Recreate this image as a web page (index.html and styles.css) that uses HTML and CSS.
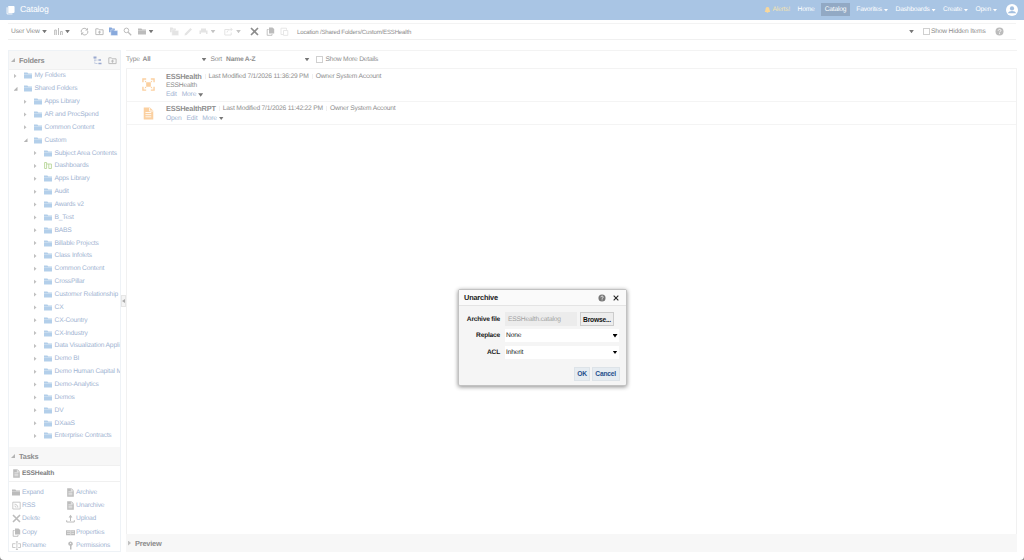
FILE: index.html
```html
<!DOCTYPE html>
<html lang="en">
<head>
  <meta charset="utf-8">
  <title>Catalog</title>
  <link rel="stylesheet" href="styles.css">
</head>
<body>
  <svg class="sprite">
    <symbol id="folder" viewBox="0 0 9 7"><path fill="currentColor" d="M0 .4h3.4l.8 1H8v5.2H0z"/><path stroke="#fff" stroke-width=".5" opacity=".7" d="M0 2.3h8"/></symbol>
    <symbol id="dash" viewBox="0 0 9 9"><path fill="none" stroke="currentColor" stroke-width=".9" d="M.6 7.5v-6h2v6zM2.6 3h4.8v4.5H4.8V3"/></symbol>
    <symbol id="chart" viewBox="0 0 9 9"><path fill="none" stroke="currentColor" d="M.7 8V3h1.6v5M4.5 8V1M6.5 8V4.5h1.8V8"/></symbol>
    <symbol id="refresh" viewBox="0 0 9 9"><path fill="none" stroke="currentColor" d="M1.2 5A3.2 3.2 0 0 1 6.8 2.4M7.8 4A3.2 3.2 0 0 1 2.2 6.8"/><path fill="currentColor" d="M5 3.4h3V.8zM4 5.6H1v2.6z"/></symbol>
    <symbol id="up" viewBox="0 0 9 9"><path fill="none" stroke="currentColor" d="M.8 7.6V1.8h2.6l.8 1h3.9v4.8z"/><path fill="currentColor" d="M4.5 3.4 6.3 5.4H5.1v1.4H3.9V5.4H2.7z"/></symbol>
    <symbol id="stack" viewBox="0 0 9 9"><path fill="currentColor" d="M0 .6h2.6l.6.8h2.6v3.8H0z"/><path fill="currentColor" stroke="#fff" stroke-width=".4" d="M1.8 2.8h2.6l.7.8h3.6v5H1.8z"/></symbol>
    <symbol id="find" viewBox="0 0 9 9"><circle cx="3.4" cy="3.4" r="2.3" fill="none" stroke="currentColor"/><path stroke="currentColor" stroke-width="1.3" d="m5.2 5.2 3 3"/></symbol>
    <symbol id="pencil" viewBox="0 0 9 9"><path fill="currentColor" d="M.5 8.5 1 6.4 6.4 1 8 2.6 2.6 8z"/></symbol>
    <symbol id="print" viewBox="0 0 9 9"><path fill="currentColor" d="M2 1.5h5v2h1.5V7H7V5.5H2V7H.5V3.5H2z"/></symbol>
    <symbol id="export" viewBox="0 0 9 9"><path fill="none" stroke="currentColor" d="M5 2.5H.8V8h6.4V5.5M3 5.5C3.5 3 5 2.5 8 2.5M6.5.8 8.2 2.5 6.5 4.2"/></symbol>
    <symbol id="cross" viewBox="0 0 9 9"><path stroke="currentColor" stroke-width="1.6" d="m1 1 7 7M8 1 1 8"/></symbol>
    <symbol id="copy" viewBox="0 0 9 9"><path fill="currentColor" d="M3 .5h3.5L8.2 2v4.5H3z"/><path fill="none" stroke="currentColor" stroke-width=".9" d="M2.6 2.5H1.2v5.8H6V7"/></symbol>
    <symbol id="paste" viewBox="0 0 9 9"><path fill="none" stroke="currentColor" stroke-width=".9" d="M3 7.5H1V1.2h5.5v1.6M3.5 3.5h4.3v4.9H3.500z"/></symbol>
    <symbol id="doc" viewBox="0 0 9 9"><path fill="currentColor" d="M1.2.3h4.3l2.3 2.3v6.1H1.2z"/><path stroke="#fff" stroke-width=".6" d="M2.4 3.8h4M2.4 5.3h4M2.4 6.8h4M5.3.6v2.200h2.300" fill="none"/></symbol>
    <symbol id="tree" viewBox="0 0 9 9"><path fill="currentColor" d="M.5.5h3v2h-3zM5.5 3.3H8v1.5H5.5zM5.5 6.7h3v1.5h-3z"/><path fill="none" stroke="currentColor" stroke-width=".7" stroke-dasharray="1 .6" d="M1.8 2.5v5h3.5M1.8 4.1h3.5"/></symbol>
    <symbol id="rss" viewBox="0 0 9 9"><path fill="none" stroke="currentColor" stroke-width=".8" d="M.8 1.2h7.4V8H.8zM2.500 3.200c2 0 3.300 1.300 3.300 3.400M2.500 5c1 0 1.500.6 1.500 1.600"/></symbol>
    <symbol id="upload" viewBox="0 0 9 9"><path fill="none" stroke="currentColor" d="M.7 6.2V8h7.6V6.2M4.5 7V3"/><path fill="currentColor" d="M4.5.8 6.4 3.5H2.6z"/></symbol>
    <symbol id="props" viewBox="0 0 9 9"><path fill="currentColor" d="M0 2.2h9v5H0z"/><path stroke="#fff" stroke-width=".5" d="M1 3.7h3M1 5.5h3M4.7 2.5v4.4M5.5 3.7h2.6M5.5 5.5h2.6"/></symbol>
    <symbol id="rename" viewBox="0 0 9 9"><path fill="none" stroke="currentColor" stroke-width=".8" d="M3.5 2.7H.6v3.8h2.9M6.2 2.7h2.3v3.8H6.2M4.9.8v7.7M3.9.8h2M3.9 8.5h2"/></symbol>
    <symbol id="key" viewBox="0 0 9 9"><path fill="currentColor" d="M2.2 2.7a2.3 2.3 0 1 1 3.3 2.1v3.8H4V4.8a2.3 2.3 0 0 1-1.8-2.1z"/><circle cx="4.6" cy="2.3" r=".6" fill="#fff"/></symbol>
    <symbol id="model" viewBox="0 0 14 14"><path fill="none" stroke="currentColor" stroke-width="1.5" d="M1 4.5V1h3.5M9.5 1H13v3.5M13 9.5V13H9.5M4.5 13H1V9.5"/><path fill="currentColor" d="M4.5 4.5h5v5h-5zM2.8 2.8l2 .8-1.2 1.2zM11.2 2.8l-.8 2-1.2-1.2zM11.2 11.2l-2-.8 1.2-1.2zM2.8 11.2l.8-2 1.2 1.2z"/></symbol>
    <symbol id="bell" viewBox="0 0 9 9"><path fill="currentColor" d="M4.5.5c2 0 2.5 1.5 2.5 3.5L8 7H1l1-3C2 2 2.5.5 4.5.5zM3.5 7.5h2v1h-2z"/></symbol>
    <symbol id="help" viewBox="0 0 9 9"><circle cx="4.5" cy="4.5" r="4" fill="currentColor"/><path fill="none" stroke="#fff" stroke-width=".9" d="M3.2 3.7c0-1.7 2.7-1.7 2.7-.2 0 .9-1.3.9-1.3 1.9M4.6 6.1v1"/></symbol>
  </svg>

  <header class="banner">
    <svg class="logo" viewBox="0 0 10 10"><path fill="#fff" d="M2.5.5h6.2l.8.8v6.2l-1 .8h-6z"/><path fill="none" stroke="#fff" d="M1.2 2v7.4h6"/></svg>
    <h1>Catalog</h1>
    <nav>
      <a class="alerts"><svg class="icon"><use href="#bell"/></svg>Alerts!</a>
      <a>Home</a>
      <a class="current">Catalog</a>
      <a>Favorites<i class="caret"></i></a>
      <a>Dashboards<i class="caret"></i></a>
      <a>Create<i class="caret"></i></a>
      <a class="open">Open<i class="caret"></i></a>
      <svg class="avatar" viewBox="0 0 12 12"><circle cx="6" cy="6" r="6" fill="#fff"/><circle cx="6" cy="4.4" r="2.1" fill="#a2bfe0"/><path fill="#a2bfe0" d="M2 9.3c.5-3.2 7.5-3.2 8 0z"/></svg>
    </nav>
  </header>

  <div class="toolbar">
    <span>User View</span><i class="caret"></i>
    <svg class="icon"><use href="#chart"/></svg><i class="caret"></i>
    <svg class="icon"><use href="#refresh"/></svg>
    <svg class="icon"><use href="#up"/></svg>
    <svg class="icon blue"><use href="#stack"/></svg>
    <svg class="icon"><use href="#find"/></svg>
    <svg class="icon"><use href="#folder"/></svg><i class="caret"></i>
    <svg class="icon off"><use href="#stack"/></svg>
    <svg class="icon off"><use href="#pencil"/></svg>
    <svg class="icon off"><use href="#print"/></svg><i class="caret off"></i>
    <svg class="icon off"><use href="#export"/></svg><i class="caret off"></i>
    <svg class="icon dark"><use href="#cross"/></svg>
    <svg class="icon"><use href="#copy"/></svg>
    <svg class="icon off"><use href="#paste"/></svg>
    <span class="location">Location /Shared Folders/Custom/ESSHealth</span><i class="caret"></i>
    <i class="check"></i><span>Show Hidden Items</span>
    <svg class="icon help"><use href="#help"/></svg>
  </div>

  <div class="page">
    <aside>
      <div class="bar">
        <i class="corner"></i><b>Folders</b>
        <svg class="icon tree-icon"><use href="#tree"/></svg>
        <svg class="icon"><use href="#up"/></svg>
      </div>
      <ul class="tree"></ul>
      <div class="bar tasks-bar"><i class="corner"></i><b>Tasks</b></div>
      <div class="selected"><svg class="icon"><use href="#doc"/></svg><b>ESSHealth</b></div>
      <div class="tasks">
        <a><svg class="icon"><use href="#folder"/></svg>Expand</a>
        <a><svg class="icon"><use href="#doc"/></svg>Archive</a>
        <a><svg class="icon"><use href="#rss"/></svg>RSS</a>
        <a><svg class="icon"><use href="#doc"/></svg>Unarchive</a>
        <a><svg class="icon"><use href="#cross"/></svg>Delete</a>
        <a><svg class="icon"><use href="#upload"/></svg>Upload</a>
        <a><svg class="icon"><use href="#copy"/></svg>Copy</a>
        <a><svg class="icon"><use href="#props"/></svg>Properties</a>
        <a><svg class="icon"><use href="#rename"/></svg>Rename</a>
        <a><svg class="icon"><use href="#key"/></svg>Permissions</a>
      </div>
    </aside>
    <div class="splitter"><span></span></div>
    <main>
      <div class="filters">
        <span>Type</span><b>All</b><i class="caret"></i>
        <span>Sort</span><b>Name A-Z</b><i class="caret"></i>
        <i class="check"></i><span>Show More Details</span>
      </div>
      <div class="list">
        <div class="item">
          <svg class="model"><use href="#model"/></svg>
          <div>
            <p><b>ESSHealth</b><i class="sep"></i>Last Modified 7/1/2026 11:36:29 PM<i class="sep"></i>Owner System Account</p>
            <p>ESSHealth</p>
            <p class="links"><a>Edit</a><a>More</a><i class="caret"></i></p>
          </div>
        </div>
        <div class="item">
          <svg class="report"><use href="#doc"/></svg>
          <div>
            <p><b>ESSHealthRPT</b><i class="sep"></i>Last Modified 7/1/2026 11:42:22 PM<i class="sep"></i>Owner System Account</p>
            <p class="links"><a>Open</a><a>Edit</a><a>More</a><i class="caret"></i></p>
          </div>
        </div>
      </div>
      <div class="bar preview"><i class="arrow"></i><b>Preview</b></div>
    </main>
  </div>

  <div class="dialog">
    <div class="dialog-title">
      <b>Unarchive</b>
      <svg class="icon"><use href="#help"/></svg>
      <svg class="icon close"><use href="#cross"/></svg>
    </div>
    <div class="form">
      <label>Archive file</label>
      <div class="file"><span>ESSHealth.catalog</span><button>Browse...</button></div>
      <label>Replace</label>
      <div class="select">None<i class="caret"></i></div>
      <label>ACL</label>
      <div class="select">Inherit<i class="caret"></i></div>
    </div>
    <div class="buttons"><button>OK</button><button>Cancel</button></div>
  </div>

  <script>
// [depth, name, state]
const folders = [
  [0, 'My Folders'],
  [0, 'Shared Folders', 'open'],
  [1, 'Apps Library'],
  [1, 'AR and ProcSpend'],
  [1, 'Common Content'],
  [1, 'Custom', 'open'],
  [2, 'Subject Area Contents'],
  [2, 'Dashboards', 'dash'],
  [2, 'Apps Library'],
  [2, 'Audit'],
  [2, 'Awards v2'],
  [2, 'B_Test'],
  [2, 'BABS'],
  [2, 'Billable Projects'],
  [2, 'Class Infolets'],
  [2, 'Common Content'],
  [2, 'CrossPillar'],
  [2, 'Customer Relationship'],
  [2, 'CX'],
  [2, 'CX-Country'],
  [2, 'CX-Industry'],
  [2, 'Data Visualization Appli'],
  [2, 'Demo BI'],
  [2, 'Demo Human Capital M'],
  [2, 'Demo-Analytics'],
  [2, 'Demos'],
  [2, 'DV'],
  [2, 'DXaaS'],
  [2, 'Enterprise Contracts'],
]

document.querySelector('.tree').innerHTML = folders.map(([depth, name, state]) => `
  <li class="depth-${depth}">
    <i class="${state === 'open' ? 'corner' : 'arrow'}"></i>
    <svg class="icon ${state === 'dash' ? 'green' : ''}"><use href="#${state === 'dash' ? 'dash' : 'folder'}"/></svg>${name}
  </li>`).join('')
  </script>
</body>
</html>
```
FILE: styles.css
```css
* { box-sizing: border-box; }
html { background: #8a8a8a; }
body {
  margin: 0;
  height: 560px;
  display: flex;
  flex-direction: column;
  overflow: hidden;
  background: #fff;
  border-radius: 0 0 4px 4px;
  color: #8e8e8e;
  font: 6.7px/9px 'Liberation Sans', Arial, sans-serif;
  letter-spacing: -.2px;
  text-rendering: geometricPrecision;
}
p, h1, ul { margin: 0; padding: 0; }
i { flex: none; }
.sprite { position: absolute; width: 0; height: 0; }
.icon { width: 9px; height: 9px; flex: none; color: #bcbcbc; }
.icon.blue { color: #88a9dc; }
.icon.green { color: #b9d69a; }
.icon.off { color: #e4e4e4; }
.icon.dark { color: #8c8c8c; }
.caret {
  display: inline-block;
  width: 5px;
  height: 3.5px;
  background: #777;
  clip-path: polygon(0 0, 100% 0, 50% 100%);
}
.caret.off { background: #c4c4c4; }
.check {
  width: 7px;
  height: 7px;
  border: 1px solid #d0d0d0;
  background: #fff;
}
.arrow {
  width: 3px;
  height: 5px;
  background: #c0c0c0;
  clip-path: polygon(0 0, 100% 50%, 0 100%);
}
.corner {
  width: 4px;
  height: 4px;
  background: #b4b4b4;
  clip-path: polygon(100% 0, 100% 100%, 0 100%);
}

/* banner */
.banner {
  flex: none;
  height: 19.5px;
  padding: 0 6px;
  display: flex;
  align-items: center;
  background: #a9c5e4;
  color: #fff;
}
.logo { width: 9px; height: 10px; }
.banner h1 {
  margin-left: 5px;
  font-size: 8.7px;
  font-weight: normal;
}
nav {
  flex: 1;
  display: flex;
  justify-content: flex-end;
  align-items: center;
}
nav a {
  display: flex;
  align-items: center;
  margin-right: 7.5px;
}
nav .caret {
  width: 4px;
  height: 2.5px;
  margin: 1px 0 0 2px;
  background: #fff;
}
nav .alerts { color: #f3e3ae; }
nav .alerts .icon { color: #f8d79b; margin-right: 2px; width: 7px; height: 8px; }
nav .current {
  height: 13px;
  padding: 0 4px;
  margin: 0 6px 0 -1.5px;
  background: #92a9c4;
}
nav .open { margin-right: 9px; }
.avatar { width: 12px; height: 12px; }

/* toolbar, one track per control */
.toolbar {
  flex: none;
  height: 17px;
  margin: 3.5px 8px 10px;
  padding-left: 3px;
  display: grid;
  align-items: center;
  grid-template-columns: 31px 12px 11px 14.5px 15px 14.5px 14px 14.5px 11px 21px 14px 15px 12px 13.5px 12px 14px 15.5px 14.5px 17px 612px 14px 8px 65px 9px;
  border-top: 1px solid #f3f3f3;
  border-bottom: 1px solid #f0f0f0;
}
.toolbar .location { font-size: 6.1px; padding-top: 1px; }
.toolbar .help { margin-left: -1px; }

.page {
  flex: 1;
  min-height: 0;
  display: flex;
  padding: 0 7px 8px 8px;
}

/* sidebar */
aside {
  width: 113px;
  display: flex;
  flex-direction: column;
  border: 1px solid #eef2f6;
}
.bar {
  flex: none;
  height: 19px;
  display: flex;
  align-items: center;
  gap: 4px;
  padding: 0 3px 0 2px;
  background: #f7f7f7;
  border-bottom: 1px solid #f0f0f0;
  font-size: 7.4px;
}
.tree-icon { margin: 0 2px 0 auto; color: #9aa9cf; }
.tree {
  flex: none;
  height: 376px;
  margin-top: -.5px;
  overflow: hidden;
  list-style: none;
  color: #9fb4d2;
}
.tree li {
  height: 12.87px;
  display: flex;
  align-items: center;
  white-space: nowrap;
}
.tree .icon { margin: 0 2px 0 6px; color: #b3cfea; }
.tree .icon.green { color: #b9d69a; }
.tree .arrow { margin-right: 1px; }
.depth-0 { padding-left: 4.5px; }
.depth-1 { padding-left: 14.5px; }
.depth-2 { padding-left: 24.5px; }
.tasks-bar { margin-top: 1.5px; }
.selected {
  flex: none;
  height: 16px;
  padding-left: 3px;
  display: flex;
  align-items: center;
  gap: 1px;
  border-bottom: 1px solid #f0f0f0;
  color: #808080;
}
.tasks {
  padding: 3.5px 0 0 3px;
  display: grid;
  grid-template-columns: 54px 1fr;
  grid-auto-rows: 13.4px;
  align-items: center;
  color: #9fb4d2;
}
.tasks a { display: flex; align-items: center; gap: 1px; }
.splitter {
  width: 5px;
  display: flex;
  align-items: center;
}
.splitter span {
  width: 5px;
  height: 12px;
  background: #f4f4f4;
  border: 1px solid #e6e6e6;
}
.splitter span::before {
  content: '';
  display: block;
  width: 3px;
  height: 4px;
  margin-top: 3px;
  background: #aaa;
  clip-path: polygon(100% 0, 100% 100%, 0 50%);
}

/* catalog list */
main {
  flex: 1;
  display: flex;
  flex-direction: column;
}
.filters {
  flex: none;
  height: 19px;
  display: grid;
  align-items: center;
  grid-template-columns: 16.5px 59px 9px 15.5px 78.5px 11px 10px 1fr;
  border-top: 1px solid #f3f3f3;
  border-bottom: 1px solid #f3f3f3;
}
.list {
  flex: 1;
  border: solid #f1f1f1;
  border-width: 0 1px;
}
.item {
  display: flex;
  padding: 2.5px 0 1.5px;
  border-bottom: 1px solid #f4f4f4;
}
.item + .item { padding-top: 2px; }
.item svg {
  width: 13px;
  height: 13px;
  margin: 6px 11px 0 15px;
  color: #fbd0a0;
}
.item .report { margin-top: 3px; }
.item p { height: 9.4px; display: flex; align-items: center; }
.item b { font-size: 7.4px; }
.sep {
  width: 1px;
  height: 5px;
  margin: 0 3px;
  background: #f0f0f0;
}
.links { color: #9fb4d2; }
.links a { margin-right: 5px; }
.links .caret { margin-left: -3px; }
.preview { height: 18px; border: 0; background: #f7f7f7; }

/* unarchive dialog */
.dialog {
  position: absolute;
  left: 458px;
  top: 289px;
  width: 169px;
  height: 97px;
  background: #f5f5f5;
  border: 1px solid #c2c2c2;
  border-radius: 2px;
  box-shadow: 0 1px 4px rgba(0, 0, 0, .45);
  color: #222;
}
.dialog-title {
  height: 16px;
  padding: 0 7px 0 5px;
  display: flex;
  align-items: center;
  background: #fafafa;
  border-bottom: 1px solid #e4e4e4;
  font-size: 7.4px;
}
.dialog-title .icon { width: 8px; height: 8px; margin-left: auto; color: #777; }
.dialog-title .close { width: 6px; height: 6px; margin-left: 7px; color: #222; }
.form {
  padding: 5px 7.5px 0 0;
  display: grid;
  grid-template-columns: 41px 1fr;
  grid-auto-rows: 16.5px;
  column-gap: 5px;
  align-items: center;
}
.form label { font-weight: bold; font-size: 6.6px; text-align: right; }
.file { display: flex; justify-content: space-between; }
.file span {
  width: 72px;
  height: 14px;
  padding: 3px 3px 2px;
  background: #ececec;
  color: #a2a2a2;
}
button {
  height: 14px;
  padding: 0 2.5px;
  border: 1px solid #dde3e8;
  background: #e6ecf1;
  color: #1f4f8c;
  font: bold 6.7px/9px 'Liberation Sans', Arial, sans-serif;
  letter-spacing: -.2px;
}
.file button { width: 34px; margin-right: 5px; color: #111; background: #ededed; border-color: #ccc; }
.select {
  height: 13px;
  padding: 0 1px;
  display: flex;
  justify-content: space-between;
  align-items: center;
  background: #fff;
}
.select .caret { background: #000; }
.buttons {
  display: flex;
  justify-content: flex-end;
  gap: 1.5px;
  padding: 6px 6.5px 0 0;
}
```
